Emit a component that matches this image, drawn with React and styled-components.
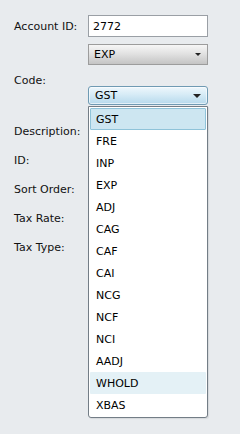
import React from "react";
import styled, { createGlobalStyle } from "styled-components";

const GlobalStyle = createGlobalStyle`
  html, body {
    margin: 0;
    padding: 0;
    background: #e8ebee;
  }
  body {
    font-family: "DejaVu Sans", Verdana, sans-serif;
    font-size: 11px;
    color: #000;
  }
`;

const Form = styled.div`
  width: 240px;
  height: 434px;
  box-sizing: border-box;
  padding: 15px 0 0 14px;
  display: flex;
  flex-direction: column;
  background: #e8ebee;
`;

const Row = styled.div`
  display: flex;
  align-items: center;
  height: ${(p) => p.$h}px;
  margin-top: ${(p) => p.$mt || 0}px;
  position: relative;
`;

const Label = styled.div`
  width: 74px;
  flex: none;
  color: #111;
  white-space: nowrap;
`;

const TextBox = styled.div`
  width: 120px;
  height: 22px;
  box-sizing: border-box;
  border: 1px solid #9a9fa5;
  background: #fff;
  display: flex;
  align-items: center;
  padding-left: 4px;
  color: #000;
`;

const Combo = styled.div`
  width: 120px;
  height: ${(p) => p.$h}px;
  box-sizing: border-box;
  display: flex;
  align-items: center;
  justify-content: space-between;
  padding: 0 6px 0 ${(p) => (p.$active ? 6 : 5)}px;
  border: 1px solid ${(p) => (p.$active ? "#6f9ab3" : "#9c9c9c")};
  border-radius: ${(p) => (p.$active ? 3 : 0)}px;
  background: ${(p) =>
    p.$active
      ? "linear-gradient(#eef7fc, #d6ebf6 45%, #b6d9ec)"
      : "linear-gradient(#f6f6f6, #e2e2e2 45%, #c4c4c4)"};
  box-shadow: ${(p) => (p.$active ? "inset 0 0 0 1px rgba(255,255,255,0.6)" : "none")};
  color: #000;
`;

const Arrow = styled.span`
  width: 0;
  height: 0;
  border-left: ${(p) => p.$s}px solid transparent;
  border-right: ${(p) => p.$s}px solid transparent;
  border-top: ${(p) => p.$s}px solid #222;
`;

const DropList = styled.div`
  position: absolute;
  top: 20px;
  left: 74px;
  width: 120px;
  box-sizing: border-box;
  border: 1px solid #737d86;
  border-radius: 0 0 3px 3px;
  background: #fff;
  padding: 1px;
  z-index: 5;
  box-shadow: 1px 1px 1px rgba(0, 0, 0, 0.08);
`;

const Item = styled.div`
  height: 22px;
  box-sizing: border-box;
  display: flex;
  align-items: center;
  padding-left: 5px;
  color: #000;
  background: ${(p) => (p.$selected ? "#cde6f1" : p.$hover ? "#e4f1f6" : "transparent")};
  border: 1px solid ${(p) => (p.$selected ? "#8fc3d9" : "transparent")};
  border-radius: 1px;
`;

const codes = [
  "GST", "FRE", "INP", "EXP", "ADJ", "CAG", "CAF",
  "CAI", "NCG", "NCF", "NCI", "AADJ", "WHOLD", "XBAS",
];

const fields = ["Description:", "ID:", "Sort Order:", "Tax Rate:", "Tax Type:"];

export default function App() {
  return (
    <>
      <GlobalStyle />
      <Form>
        <Row $h={22}>
          <Label>Account ID:</Label>
          <TextBox>2772</TextBox>
        </Row>
        <Row $h={21} $mt={7}>
          <Label />
          <Combo $h={21}>
            EXP
            <Arrow $s={3} />
          </Combo>
        </Row>
        <Row $h={12} $mt={9}>
          <Label>Code:</Label>
        </Row>
        <Row $h={19}>
          <Label />
          <Combo $h={19} $active>
            GST
            <Arrow $s={4} />
          </Combo>
          <DropList>
            {codes.map((c, i) => (
              <Item key={c} $selected={i === 0} $hover={c === "WHOLD"}>
                {c}
              </Item>
            ))}
          </DropList>
        </Row>
        {fields.map((f, i) => (
          <Row key={f} $h={29} $mt={i === 0 ? 12 : 0}>
            <Label>{f}</Label>
          </Row>
        ))}
      </Form>
    </>
  );
}
